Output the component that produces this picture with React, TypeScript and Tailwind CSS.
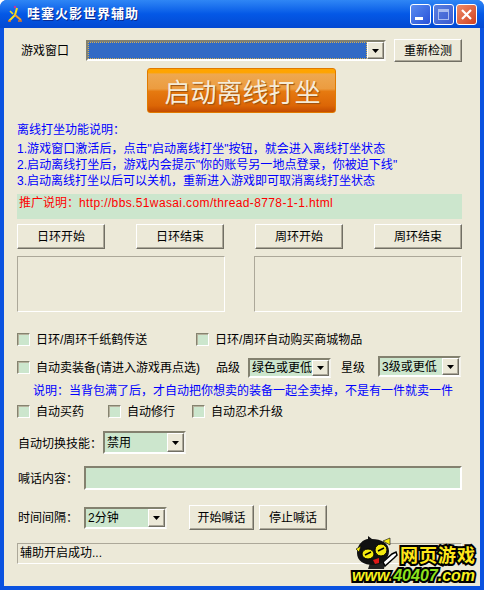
import React from 'react';

const bevel = 'border border-t-white border-l-white border-r-[#716f64] border-b-[#716f64] shadow-[inset_-1px_-1px_0_#aca899]';

const Btn: React.FC<{ label: string; className?: string }> = ({ label, className }) => (
    <button className={`${bevel} bg-[#ece9d8] text-black text-[12px] flex items-center justify-center ${className}`}>
        {label}
    </button>
);

const Check: React.FC<{ label: string; className?: string }> = ({ label, className }) => (
    <div className={`flex items-center gap-[6px] ${className}`}>
        <span className="block -mt-[1px] w-[13px] h-[13px] bg-[#cce6cd] border border-t-[#85836f] border-l-[#85836f] border-r-white border-b-white shadow-[inset_1px_1px_0_#b5b29d]" />
        <span className="whitespace-nowrap">{label}</span>
    </div>
);

const Combo: React.FC<{ value?: string; className?: string; selected?: boolean }> = ({ value, className, selected }) => (
    <div className={`flex items-stretch bg-[#cce6cd] border-2 border-t-[#83816f] border-l-[#83816f] border-r-[#f4f3ec] border-b-white overflow-hidden ${className}`}>
        <div className={`flex-1 min-w-0 flex items-center pl-[2px] whitespace-nowrap overflow-hidden ${selected ? 'bg-[#316ac5] border border-dotted border-[#d8b050]' : ''}`}>
            {value}
        </div>
        <div className={`${bevel} w-[17px] shrink-0 bg-[#ece9d8] flex items-center justify-center`}>
            <svg width="7" height="4" viewBox="0 0 7 4"><path d="M0 0h7L3.5 4z" fill="#000" /></svg>
        </div>
    </div>
);

const WinBtn: React.FC<{ className: string; children: React.ReactNode }> = ({ className, children }) => (
    <div className={`w-[21px] h-[21px] rounded-[3px] border border-white flex items-center justify-center ${className}`}>{children}</div>
);

const Logo: React.FC = () => (
    <div className="absolute left-[348px] top-[507px] w-[127px] h-[50px]">
        <svg className="absolute left-[4px] top-0" width="46" height="36" viewBox="0 0 46 36">
            <path d="M14 28l7-3 8 3-1 6H12z" fill="#222" />
            <path d="M27 27l9-8 4-2 1 3-3 3-9 8z" fill="#fff" stroke="#000" strokeWidth="1.5" />
            <path d="M1 18C1 9 8 4 12 4l0-3 4 3c9 0 17 4 17 12s-7 14-16 14S1 26 1 18z" fill="#111" />
            <ellipse cx="12" cy="19" rx="6" ry="5" fill="#f5ea10" stroke="#000" />
            <ellipse cx="25" cy="15" rx="6" ry="6" fill="#f5ea10" stroke="#000" />
            <path d="M9 20l6-3M22 16l6-3" stroke="#000" strokeWidth="1.5" />
            <path d="M17 25l6-2 0 5-4 1z" fill="#e01818" />
            <path d="M27 6l7-3 0 7zM0 14l5-3-2 6z" fill="#f5ea10" stroke="#000" strokeWidth=".6" />
        </svg>
        <div className="absolute left-[48px] top-[8px] whitespace-nowrap text-[18px] leading-[22px] font-bold text-[#ffe81a] [-webkit-text-stroke:4px_#000] [paint-order:stroke_fill] font-['Noto_Sans_CJK_SC',sans-serif] tracking-[1px]">
            网页游戏
        </div>
        <div className="absolute left-0 top-[32px] whitespace-nowrap text-[16px] leading-[18px] font-bold italic text-[#f7f01c] [-webkit-text-stroke:4px_#000] [paint-order:stroke_fill] font-['Liberation_Sans',sans-serif]">
            www.<span className="text-[#8ce21c]">40407</span>.com
        </div>
    </div>
);

const App: React.FC = () => {
    return (
        <div className="w-[484px] h-[590px] flex flex-col bg-[#0a52e0] rounded-t-[7px] text-[12px] leading-[16px] text-black font-['Liberation_Sans','Noto_Sans_CJK_SC',sans-serif] overflow-hidden">
            {/* Title bar */}
            <div className="h-[28px] shrink-0 flex items-center pl-[7px] pr-[7px] bg-gradient-to-b from-[#2f86f5] via-[#0458e6] to-[#0349d2]">
                <svg width="16" height="18" viewBox="0 0 16 18" className="shrink-0">
                    <path d="M10 3L8 10 2 16" stroke="#f6e01c" strokeWidth="2" fill="none" />
                    <path d="M8 10l6 5" stroke="#f0a030" strokeWidth="2" fill="none" />
                    <path d="M3 6l3 3" stroke="#f6e01c" strokeWidth="1.6" fill="none" />
                    <path d="M1 16h3M11 16h4" stroke="#e87818" strokeWidth="1.4" />
                    <circle cx="8" cy="2" r="1.2" fill="#d0309a" />
                </svg>
                <span className="ml-[4px] text-white font-bold text-[13px] tracking-[1px] [text-shadow:1px_1px_0_#0a2a90]">哇塞火影世界辅助</span>
                <div className="ml-auto flex gap-[2px]">
                    <WinBtn className="bg-gradient-to-br from-[#5b8cf0] to-[#2a50d8]">
                        <span className="block w-[8px] h-[3px] bg-white mt-[9px] mr-[3px]" />
                    </WinBtn>
                    <WinBtn className="bg-gradient-to-br from-[#5b80e0] to-[#3a5ad0] border-[#9db6f0]">
                        <span className="block w-[11px] h-[11px] border border-t-[3px] border-[#a8bcf0]" />
                    </WinBtn>
                    <WinBtn className="bg-gradient-to-br from-[#ee8a68] to-[#cf3f1c]">
                        <svg width="11" height="11" viewBox="0 0 11 11"><path d="M1 1l9 9M10 1l-9 9" stroke="#fff" strokeWidth="2.2" /></svg>
                    </WinBtn>
                </div>
            </div>

            {/* Client area */}
            <div className="relative flex-1 mx-[4px] mb-[4px] bg-[#ece9d8] pl-[13px] pr-[18px] flex flex-col">
                <div className="mt-[11px] flex items-center h-[23px]">
                    <span className="w-[69px] pl-[4px] shrink-0">游戏窗口</span>
                    <Combo selected className="w-[300px] h-[21px]" />
                    <Btn label="重新检测" className="ml-[8px] w-[68px] h-[23px]" />
                </div>

                <button className="mt-[6px] ml-[130px] w-[189px] h-[45px] pl-[2px] rounded-[3px] border border-[#e07a00] bg-[linear-gradient(#ffa400_0,#ffa400_8%,#eea850_12%,#ec9c40_46%,#e67a10_52%,#dc6606_85%,#c44c00_100%)] text-[#f5ecd8] text-[26px] leading-none [text-shadow:1px_1px_1px_#9a5010] font-['Noto_Sans_CJK_SC',sans-serif]">
                    启动离线打坐
                </button>

                <div className="mt-[9px] h-[16px] text-[#0000ff] whitespace-nowrap">离线打坐功能说明：</div>
                <div className="mt-[3px] text-[#0000ff] whitespace-nowrap">
                    <div className="tracking-[0.05px]">1.游戏窗口激活后，点击"启动离线打坐"按钮，就会进入离线打坐状态</div>
                    <div className="tracking-[0.05px]">2.启动离线打坐后，游戏内会提示"你的账号另一地点登录，你被迫下线"</div>
                    <div>3.启动离线打坐以后可以关机，重新进入游戏即可取消离线打坐状态</div>
                </div>

                <div className="mt-[5px] h-[25px] bg-[#cce6cd] pl-[2px] pt-[1px] text-[#ff0000] whitespace-nowrap">
                    推广说明：<span className="tracking-[0.37px]">http://bbs.51wasai.com/thread-8778-1-1.html</span>
                </div>

                <div className="mt-[5px] flex justify-between">
                    <Btn label="日环开始" className="w-[88px] h-[25px]" />
                    <Btn label="日环结束" className="w-[88px] h-[25px]" />
                    <Btn label="周环开始" className="w-[88px] h-[25px]" />
                    <Btn label="周环结束" className="w-[88px] h-[25px]" />
                </div>

                <div className="mt-[7px] flex justify-between">
                    <div className="w-[208px] h-[56px] border border-t-[#aca899] border-l-[#aca899] border-r-white border-b-white" />
                    <div className="w-[208px] h-[56px] border border-t-[#aca899] border-l-[#aca899] border-r-white border-b-white" />
                </div>

                <div className="mt-[20px] h-[16px] flex items-center">
                    <Check label="日环/周环千纸鹤传送" className="w-[179px]" />
                    <Check label="日环/周环自动购买商城物品" />
                </div>

                <div className="mt-[9px] h-[22px] flex items-center">
                    <Check label="自动卖装备(请进入游戏再点选)" className="w-[199px]" />
                    <span className="w-[32px] shrink-0">品级</span>
                    <Combo value="绿色或更低" className="w-[83px] h-[20px]" />
                    <span className="ml-[10px] w-[37px] shrink-0">星级</span>
                    <Combo value="3级或更低" className="w-[83px] h-[21px] -mt-[3px]" />
                </div>

                <div className="mt-[4px] pl-[16px] h-[16px] text-[#0000ff] whitespace-nowrap">说明：当背包满了后，才自动把你想卖的装备一起全卖掉，不是有一件就卖一件</div>

                <div className="mt-[5px] h-[16px] flex items-center">
                    <Check label="自动买药" className="w-[91px]" />
                    <Check label="自动修行" className="w-[84px]" />
                    <Check label="自动忍术升级" />
                </div>

                <div className="mt-[11px] h-[23px] flex items-center">
                    <span className="w-[86px] pl-[1px] pt-[2px] shrink-0">自动切换技能：</span>
                    <Combo value="禁用" className="w-[83px] h-[23px]" />
                </div>

                <div className="mt-[12px] h-[24px] flex items-center">
                    <span className="w-[67px] pl-[1px] pt-[1px] shrink-0">喊话内容：</span>
                    <div className="w-[378px] h-[24px] bg-[#cce6cd] border-2 border-t-[#83816f] border-l-[#83816f] border-r-white border-b-white" />
                </div>

                <div className="mt-[15px] h-[25px] flex items-center">
                    <span className="w-[67px] pl-[1px] shrink-0">时间间隔：</span>
                    <Combo value="2分钟" className="w-[83px] h-[22px]" />
                    <Btn label="开始喊话" className="ml-[22px] w-[65px] h-[25px]" />
                    <Btn label="停止喊话" className="ml-[5px] w-[68px] h-[25px]" />
                </div>

                <div className="mt-[13px] h-[21px] pl-[2px] pt-[1px] border border-t-[#aca899] border-l-[#aca899] border-r-white border-b-white whitespace-nowrap">
                    辅助开启成功...
                </div>

                <Logo />
            </div>
        </div>
    );
};

export default App;
